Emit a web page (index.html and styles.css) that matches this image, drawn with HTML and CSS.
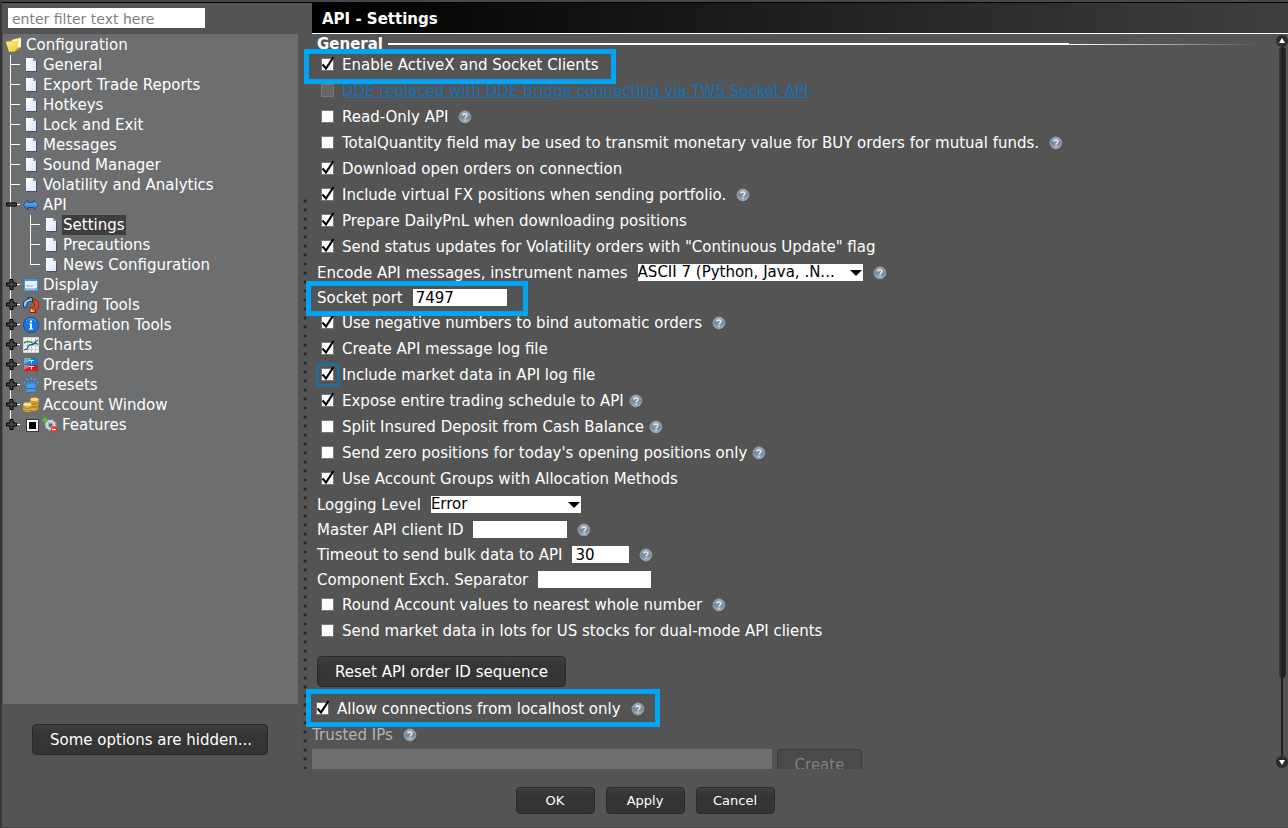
FILE: index.html
```html
<!DOCTYPE html>
<html lang="en">
<head>
<meta charset="utf-8">
<title>API - Settings</title>
<link rel="stylesheet" href="styles.css">
</head>
<body>
<svg class="defs" aria-hidden="true">
  <defs>
    <linearGradient id="g-doc" x1="0" y1="0" x2="1" y2="1"><stop offset="0" stop-color="#fff"/><stop offset="1" stop-color="#dbe6f7"/></linearGradient>
    <linearGradient id="g-help" x1="0" y1="0" x2="0" y2="1"><stop offset="0" stop-color="#a9b3bd"/><stop offset="0.5" stop-color="#71879d"/><stop offset="1" stop-color="#a4b6c6"/></linearGradient>
    <linearGradient id="g-blue" x1="0" y1="0" x2="0" y2="1"><stop offset="0" stop-color="#7fc0fa"/><stop offset="1" stop-color="#1c6fd0"/></linearGradient>
    <linearGradient id="g-gold" x1="0" y1="0" x2="1" y2="1"><stop offset="0" stop-color="#fff3a0"/><stop offset="1" stop-color="#f2c31c"/></linearGradient>
  </defs>
  <symbol id="doc" viewBox="0 0 16 16"><path d="M3 2h8l3 3v10H3z" fill="#3f4f78"/><path d="M3 1h7l3 3v10H3z" fill="url(#g-doc)"/><path d="M10 1v3h3z" fill="#7c9ccc"/></symbol>
  <symbol id="plus" viewBox="0 0 11 11"><path d="M4 .5h3V4h3.500v3H7v3.500H4V7H.5V4H4z" fill="#444" stroke="#000"/></symbol>
  <symbol id="minus" viewBox="0 0 11 11"><path d="M.5 4h10v3H.5z" fill="#444" stroke="#000"/></symbol>
  <symbol id="help" viewBox="0 0 14 14"><circle cx="7.300" cy="7.400" r="6.500" fill="#3d3d3d"/><circle cx="7" cy="7" r="6" fill="url(#g-help)" stroke="#9a9fa4"/><path d="M5 5.600C5 3.400 9 3.400 9 5.500 9 6.900 7.100 6.800 7.100 8.400M7.100 9.400v1.400" fill="none" stroke="#e6ebf0" stroke-width="1.400"/></symbol>
</svg>

<div class="window">
  <div class="body">
    <aside class="sidebar">
      <div class="filter-bar"><input class="filter" type="text" placeholder="enter filter text here" aria-label="Filter"></div>
      <nav class="tree" aria-label="Configuration">
        <div class="node root">
          <svg class="icon" viewBox="0 0 16 16"><path d="M0 4l5-.5L7 2l8-2v11l-7 4-5-1z" fill="#c99a17"/><path d="M6 3l9-2v9l-6 1z" fill="#fffbd5"/><path d="M0 5l9-1 4-1-3 11-7 1z" fill="url(#g-gold)"/></svg>
          <span class="label">Configuration</span>
        </div>
        <ul class="branch">
          <li><div class="node"><svg class="icon"><use href="#doc"/></svg><span class="label">General</span></div></li>
          <li><div class="node"><svg class="icon"><use href="#doc"/></svg><span class="label">Export Trade Reports</span></div></li>
          <li><div class="node"><svg class="icon"><use href="#doc"/></svg><span class="label">Hotkeys</span></div></li>
          <li><div class="node"><svg class="icon"><use href="#doc"/></svg><span class="label">Lock and Exit</span></div></li>
          <li><div class="node"><svg class="icon"><use href="#doc"/></svg><span class="label">Messages</span></div></li>
          <li><div class="node"><svg class="icon"><use href="#doc"/></svg><span class="label">Sound Manager</span></div></li>
          <li><div class="node"><svg class="icon"><use href="#doc"/></svg><span class="label">Volatility and Analytics</span></div></li>
          <li>
            <div class="node"><svg class="toggle"><use href="#minus"/></svg>
              <svg class="icon" viewBox="0 0 16 16"><path d="M.5 8L5 3v2.500h6V3L15.500 8 11 13v-2.500H5V13z" fill="url(#g-blue)" stroke="#1b4f94"/></svg>
              <span class="label">API</span></div>
            <ul class="branch">
              <li><div class="node"><svg class="icon"><use href="#doc"/></svg><span class="label selected">Settings</span></div></li>
              <li><div class="node"><svg class="icon"><use href="#doc"/></svg><span class="label">Precautions</span></div></li>
              <li><div class="node"><svg class="icon"><use href="#doc"/></svg><span class="label">News Configuration</span></div></li>
            </ul>
          </li>
          <li><div class="node"><svg class="toggle"><use href="#plus"/></svg>
            <svg class="icon" viewBox="0 0 16 16"><path d="M1 2h14v12H1z" fill="#2f9bea"/><path d="M2 4h12v7H2z" fill="#e8f1fa"/><path d="M2 11h12v2H2z" fill="#8fb4d8"/><path d="M3 8h7v2H3z" fill="#b5cce4"/><path d="M4 12h1m2 0h1m2 0h1" stroke="#fff"/></svg>
            <span class="label">Display</span></div></li>
          <li><div class="node"><svg class="toggle"><use href="#plus"/></svg>
            <svg class="icon" viewBox="0 0 16 16"><path d="M1 11C-1 5 2 2 6 2L4.500.5H9.500V6L8 4.500C5 4 3.500 6 4 10z" fill="#5fa8ee" stroke="#17365f" stroke-width=".9"/><path d="M1.500 8C2 5 4 3.200 7 3.200" stroke="#d5ebff" fill="none"/><path d="M11 2c4 1 6 5 4 8.500-1 1.500-2 2-3 2.500l1.500 2.500H7V10l1.500 1.500C12 11 12.500 7 10 4.500z" fill="#e8481a" stroke="#7e240b" stroke-width=".9"/><path d="M7.500 11v4h4z" fill="#ffb37a"/></svg>
            <span class="label">Trading Tools</span></div></li>
          <li><div class="node"><svg class="toggle"><use href="#plus"/></svg>
            <svg class="icon" viewBox="0 0 16 16"><circle cx="8" cy="8" r="7.500" fill="#1478e2" stroke="#0b4fa8"/><path d="M3 4c3-3 7-3 10 0" stroke="#64b0fa" fill="none"/><path d="M7 3.500h2v2H7zM6 6.500h3v5h1v1H6v-1h1v-4H6z" fill="#fff"/></svg>
            <span class="label">Information Tools</span></div></li>
          <li><div class="node"><svg class="toggle"><use href="#plus"/></svg>
            <svg class="icon" viewBox="0 0 16 16"><path d="M.5.5h15v15H.5z" fill="#f2f4f7" stroke="#cfd5dd"/><path d="M1 4.500h14M1 8.500h14M1 12.500h14M4.500 1v14M8.500 1v14M12.500 1v14" stroke="#b9c1cf" stroke-width=".7"/><path d="M1 6l3-1.500 4 .5 3 2 2-3 2-1" stroke="#2da52d" stroke-width="1.400" fill="none"/><path d="M1 13l3-1 2-4 4-.5 2-2 3 2" stroke="#26509b" stroke-width="1.300" fill="none"/></svg>
            <span class="label">Charts</span></div></li>
          <li><div class="node"><svg class="toggle"><use href="#plus"/></svg>
            <svg class="icon" viewBox="0 0 16 16"><path d="M1 1h14v7H1z" fill="#1679d8"/><path d="M1 8h14v6H1z" fill="#d61c1c"/><path d="M1 1h7v3L1 7z" fill="#5eb0f3"/><path d="M1 8h5v2l-5 3z" fill="#f16a6a"/><path d="M6 3.500h5M8.500 3v3.500M6 9.500h5M8.500 9v3.500" stroke="#dfe9f5" stroke-width="1"/></svg>
            <span class="label">Orders</span></div></li>
          <li><div class="node"><svg class="toggle"><use href="#plus"/></svg>
            <svg class="icon" viewBox="0 0 16 16"><path d="M1.500 5.500L5 8l-.5-5L7 7l1-5 1 5 2.500-4L11 8l3.500-2.500L12 11v2l2 2H2l2-2v-2z" fill="#4aa2ee" stroke="#2a74c4" stroke-width=".5"/><path d="M4.500 11.500h7" stroke="#1e63b0"/><g fill="#6bb8fb" stroke="#1e63b0" stroke-width=".5"><circle cx="8" cy="1.500" r="1.200"/><circle cx="4" cy="2.500" r="1.200"/><circle cx="12" cy="2.500" r="1.200"/><circle cx="1.300" cy="5.500" r="1.100"/><circle cx="14.700" cy="5.500" r="1.100"/></g></svg>
            <span class="label">Presets</span></div></li>
          <li><div class="node"><svg class="toggle"><use href="#plus"/></svg>
            <svg class="icon" viewBox="0 0 16 16"><path d="M7 2v11c1 2 8 1 8-1l1-9z" fill="#dfa336"/><path d="M7 6c2 1.500 7 1.500 8.500-.5M7 9c2 1.500 7 1.500 8.500-.5" stroke="#9a6a18" fill="none"/><ellipse cx="11.500" cy="2.500" rx="4.400" ry="2.100" fill="#fbdc83" stroke="#b07a1d" stroke-width=".6"/><path d="M0 8v5c1 3 8 3 9 0V8z" fill="#e8b145"/><path d="M0 10c2 2 7 2 9 0M0 12.500c2 2 7 2 9 0" stroke="#9a6a18" fill="none" stroke-width=".8"/><ellipse cx="4.500" cy="7.500" rx="4.400" ry="2.200" fill="#fde395" stroke="#b07a1d" stroke-width=".6"/></svg>
            <span class="label">Account Window</span></div></li>
          <li><div class="node"><svg class="toggle"><use href="#plus"/></svg>
            <input class="tri" type="checkbox" aria-label="Features">
            <svg class="icon gear" viewBox="0 0 16 16"><circle cx="8.500" cy="8" r="5.500" fill="none" stroke="#8d87a5" stroke-width="2" stroke-dasharray="2.300 2"/><circle cx="8.500" cy="8" r="4" fill="#aaa6bd" stroke="#dcd9e8" stroke-width="2"/><circle cx="8.500" cy="8" r="1.500" fill="#5c5870"/><path d="M3 0v6M0 3h6" stroke="#4cc22b" stroke-width="2"/><circle cx="12" cy="12.500" r="3.200" fill="#e13a22"/><path d="M10 12.500h4" stroke="#fff" stroke-width="1.400"/></svg>
            <span class="label">Features</span></div></li>
        </ul>
      </nav>
      <div class="sidebar-foot"><button class="btn" type="button">Some options are hidden...</button></div>
    </aside>

    <div class="splitter"></div>

    <main class="panel">
      <h1 class="title">API - Settings</h1>
      <div class="view">
        <form class="content">
          <h2 class="section">General<span class="rule"></span></h2>

          <div class="row marked mark-a"><label class="opt"><input class="chk" type="checkbox" checked>Enable ActiveX and Socket Clients</label></div>
          <div class="row"><span class="opt"><input class="chk" type="checkbox" disabled aria-label="DDE"><a class="link" href="#">DDE replaced with DDE Bridge connecting via TWS Socket API</a></span></div>
          <div class="row"><label class="opt"><input class="chk" type="checkbox">Read-Only API</label><button class="help" type="button" aria-label="Help"><svg><use href="#help"/></svg></button></div>
          <div class="row"><label class="opt"><input class="chk" type="checkbox">TotalQuantity field may be used to transmit monetary value for BUY orders for mutual funds.</label><button class="help" type="button" aria-label="Help"><svg><use href="#help"/></svg></button></div>
          <div class="row"><label class="opt"><input class="chk" type="checkbox" checked>Download open orders on connection</label></div>
          <div class="row"><label class="opt"><input class="chk" type="checkbox" checked>Include virtual FX positions when sending portfolio.</label><button class="help" type="button" aria-label="Help"><svg><use href="#help"/></svg></button></div>
          <div class="row"><label class="opt"><input class="chk" type="checkbox" checked>Prepare DailyPnL when downloading positions</label></div>
          <div class="row"><label class="opt"><input class="chk" type="checkbox" checked>Send status updates for Volatility orders with "Continuous Update" flag</label></div>
          <div class="row field"><label for="enc">Encode API messages, instrument names</label><select class="select wide" id="enc"><option>ASCII 7 (Python, Java, .N...</option></select><button class="help" type="button" aria-label="Help"><svg><use href="#help"/></svg></button></div>
          <div class="row field marked mark-b"><label for="port">Socket port</label><input class="text w-m" id="port" type="text" value="7497"></div>
          <div class="row"><label class="opt"><input class="chk" type="checkbox" checked>Use negative numbers to bind automatic orders</label><button class="help" type="button" aria-label="Help"><svg><use href="#help"/></svg></button></div>
          <div class="row"><label class="opt"><input class="chk" type="checkbox" checked>Create API message log file</label></div>
          <div class="row"><label class="opt"><input class="chk focused" type="checkbox" checked>Include market data in API log file</label></div>
          <div class="row tight"><label class="opt"><input class="chk" type="checkbox" checked>Expose entire trading schedule to API</label><button class="help" type="button" aria-label="Help"><svg><use href="#help"/></svg></button></div>
          <div class="row tight"><label class="opt"><input class="chk" type="checkbox">Split Insured Deposit from Cash Balance</label><button class="help" type="button" aria-label="Help"><svg><use href="#help"/></svg></button></div>
          <div class="row tight"><label class="opt"><input class="chk" type="checkbox">Send zero positions for today's opening positions only</label><button class="help" type="button" aria-label="Help"><svg><use href="#help"/></svg></button></div>
          <div class="row"><label class="opt"><input class="chk" type="checkbox" checked>Use Account Groups with Allocation Methods</label></div>
          <div class="row field"><label for="log">Logging Level</label><select class="select" id="log"><option>Error</option></select></div>
          <div class="row field"><label for="master">Master API client ID</label><input class="text w-m" id="master" type="text"><button class="help" type="button" aria-label="Help"><svg><use href="#help"/></svg></button></div>
          <div class="row field"><label for="timeout">Timeout to send bulk data to API</label><input class="text w-s" id="timeout" type="text" value="30"><button class="help" type="button" aria-label="Help"><svg><use href="#help"/></svg></button></div>
          <div class="row field"><label for="sep">Component Exch. Separator</label><input class="text w-l" id="sep" type="text"></div>
          <div class="row"><label class="opt"><input class="chk" type="checkbox">Round Account values to nearest whole number</label><button class="help" type="button" aria-label="Help"><svg><use href="#help"/></svg></button></div>
          <div class="row"><label class="opt"><input class="chk" type="checkbox">Send market data in lots for US stocks for dual-mode API clients</label></div>

          <div class="reset"><button class="btn" type="button">Reset API order ID sequence</button></div>

          <div class="trusted">
            <div class="row marked mark-c"><label class="opt"><input class="chk" type="checkbox" checked>Allow connections from localhost only</label><button class="help" type="button" aria-label="Help"><svg><use href="#help"/></svg></button></div>
            <div class="row muted"><span>Trusted IPs</span><button class="help" type="button" aria-label="Help"><svg><use href="#help"/></svg></button></div>
            <div class="ips"><div class="list"></div><button class="btn" type="button" disabled>Create</button></div>
          </div>
        </form>
        <div class="scroll">
          <svg class="arrow" viewBox="0 0 12 12"><circle cx="6" cy="6" r="6" fill="#2c2c2c"/><path d="M6 3l3 5H3z" fill="#fff"/></svg>
          <div class="track"><div class="thumb"></div></div>
          <svg class="arrow" viewBox="0 0 12 12"><circle cx="6" cy="6" r="6" fill="#2c2c2c"/><path d="M6 9l3-5H3z" fill="#fff"/></svg>
        </div>
      </div>
    </main>
  </div>

  <footer class="actions">
    <button class="btn small" type="button">OK</button>
    <button class="btn small" type="button">Apply</button>
    <button class="btn small" type="button">Cancel</button>
  </footer>
</div>
</body>
</html>
```
FILE: styles.css
```css
*, *::before, *::after { box-sizing: border-box; }

body {
  margin: 0;
  background: #545454;
  color: #fff;
  font: 15px/20px Verdana, "DejaVu Sans", sans-serif;
}

input, select, button { font: inherit; margin: 0; }

.defs { position: absolute; width: 0; height: 0; }

.window {
  display: flex;
  flex-direction: column;
  height: 100vh;
  border-top: 2px solid #474747;
  border-left: 2px solid #363636;
  border-bottom: 1px solid #444;
  overflow: hidden;
}

.body {
  display: flex;
  flex: 1;
  min-height: 0;
  border-top: 1px solid #000;
}

/* Sidebar */
.sidebar { display: flex; flex-direction: column; width: 296px; padding-left: 1px; font-size: 15px; }
.filter-bar { padding: 5px 5px 6px; }
.filter {
  display: block;
  width: 197px;
  height: 20px;
  padding: 2px 4px 0;
  border: 0;
  background: #fff;
  color: #000;
  font-size: 14px;
}
.filter::placeholder { color: #808080; opacity: 1; }

.tree { flex: 1; padding: 1px 0 0 3px; background: #6d6e70; overflow: hidden; }
.branch { margin: 0; padding: 0; list-style: none; }
.branch li { position: relative; padding-left: 17px; }
.branch .branch { margin-left: 3px; }
.branch li::before {
  content: "";
  position: absolute;
  left: 4px;
  top: 0;
  bottom: 0;
  border-left: 1px solid #fff;
}
.branch li:last-child::before { bottom: auto; height: 10px; }
.branch li::after {
  content: "";
  position: absolute;
  left: 4px;
  top: 9px;
  width: 10px;
  border-top: 1px solid #fff;
}
.node { display: flex; align-items: center; height: 20px; gap: 3px; }
.icon { width: 16px; height: 16px; flex: none; }
.toggle { position: absolute; left: 0; top: 4px; z-index: 1; width: 11px; height: 11px; }
.label { padding: 0 1px; white-space: nowrap; }
.label.selected { background: #3e3e3e; }
.tri {
  appearance: none;
  width: 13px;
  height: 13px;
  margin-left: 3px;
  border: 1px solid #3a3a3a;
  background: #000;
  box-shadow: inset 0 0 0 2px #fff;
}

.sidebar-foot { padding: 20px 30px 14px 29px; }
.sidebar-foot .btn { width: 100%; }

.splitter {
  flex: none;
  width: 14px;
  margin-top: 193px;
  background: radial-gradient(circle at 7px 5px, #262626 1px, transparent 2px) 0 0 / 14px 9px repeat-y;
}

/* Main panel */
.panel { display: flex; flex-direction: column; flex: 1; min-width: 0; }
.title {
  margin: 0;
  padding: 6px 10px 4px;
  border-bottom: 1px solid #fff;
  background: linear-gradient(90deg, #000, #3f3f3f);
  font-size: 15px;
  line-height: 20px;
}
.view { display: flex; flex: 1; min-height: 0; }
.content { flex: 1; min-width: 0; padding-left: 5px; }

.section { display: flex; gap: 5px; align-items: center; margin: 0; padding-top: 2px; height: 18px; font-size: 15px; }
.rule {
  flex: 1;
  height: 2px;
  margin-right: 15px;
  background: linear-gradient(#fff, #fff) 0 0 / 78% 1px no-repeat,
              linear-gradient(90deg, #fff 78%, transparent) 0 1px / 100% 1px no-repeat;
}

.row { display: flex; align-items: center; gap: 10px; height: 26px; white-space: nowrap; }
.row.tight { gap: 5px; }
.row.field { height: 25px; }
.opt { display: flex; align-items: center; gap: 5px; padding-left: 2px; }

.chk {
  appearance: none;
  flex: none;
  width: 18px;
  height: 18px;
  background: url("data:image/svg+xml,%3Csvg xmlns='http://www.w3.org/2000/svg' width='18' height='18'%3E%3Cpath d='M2.500 2.500h12v12h-12z' fill='%23fff' stroke='%23777'/%3E%3C/svg%3E");
}
.chk:checked {
  background-image: url("data:image/svg+xml,%3Csvg xmlns='http://www.w3.org/2000/svg' width='18' height='18'%3E%3Cpath d='M2.500 2.500h12v12h-12z' fill='%23fff' stroke='%23777'/%3E%3Cpath d='M3.500 8.500L7 12.500 14.500 1' fill='none' stroke='%23000' stroke-width='2.200'/%3E%3C/svg%3E");
}
.chk:disabled {
  background-image: url("data:image/svg+xml,%3Csvg xmlns='http://www.w3.org/2000/svg' width='18' height='18'%3E%3Cpath d='M2.500 2.500h12v12h-12z' fill='%23666' stroke='%23777'/%3E%3C/svg%3E");
}
.chk.focused { outline: 3px solid #266a96; }
.link { color: #1471b3; text-decoration: underline; }

.help { flex: none; width: 14px; height: 14px; padding: 0; border: 0; background: none; }
.help svg { display: block; width: 14px; height: 14px; }

.text { height: 17px; padding: 1px 3px 0; border: 0; background: #fff; color: #000; }
.w-s { width: 57px; }
.w-m { width: 94px; }
.w-l { width: 113px; }
.select {
  appearance: none;
  width: 150px;
  height: 17px;
  padding: 0;
  border: 0;
  border-radius: 0;
  color: #000;
  line-height: 17px;
  background: #fff url("data:image/svg+xml,%3Csvg xmlns='http://www.w3.org/2000/svg' width='12' height='6'%3E%3Cpath d='M0 0h12L6 6z'/%3E%3C/svg%3E") right 1px center no-repeat;
}
.select.wide { width: 225px; }

/* Callout frames drawn over the rows */
.marked { position: relative; }
.marked::after { content: ""; position: absolute; border: 5px solid #00a6f4; pointer-events: none; }
.mark-a::after { left: -13px; top: -3px; width: 312px; height: 35px; }
.mark-b::after { left: -11px; top: -4px; width: 222px; height: 35px; }
.mark-c::after { left: -6px; top: -7px; width: 354px; height: 38px; }

.btn {
  height: 31px;
  padding: 0 17px;
  border: 1px solid #2a2a2a;
  border-radius: 4px;
  background: linear-gradient(#3f3f3f, #353535 30%, #343434);
  color: #fff;
  white-space: nowrap;
}
.btn:disabled { border-color: #3c3c3c; background: #4a4a4a; color: #808080; }
.btn.small { width: 79px; height: 27px; padding: 0; font-size: 13px; }

.reset { padding: 12px 0 9px; }
.trusted { margin-left: -5px; }
.muted { color: #b4b4b4; }
.ips { display: flex; gap: 5px; height: 20px; margin-top: 1px; overflow: hidden; }
.list { width: 460px; background: #6d6e70; }
.ips .btn { width: 85px; padding: 0; }

/* Scroll bar */
.scroll { display: flex; flex-direction: column; align-items: center; flex: none; width: 12px; padding: 1px 0; }
.arrow { width: 12px; height: 12px; flex: none; }
.track { flex: 1; width: 7px; background: linear-gradient(#222, #222) center / 2px 100% no-repeat; }
.thumb { height: 89%; border-radius: 4px; background: linear-gradient(90deg, #3c3c3c, #1d1d1d 50%, #2b2b2b); }

.actions { display: flex; flex: none; justify-content: center; gap: 11px; padding: 18px 0 13px; }
```
